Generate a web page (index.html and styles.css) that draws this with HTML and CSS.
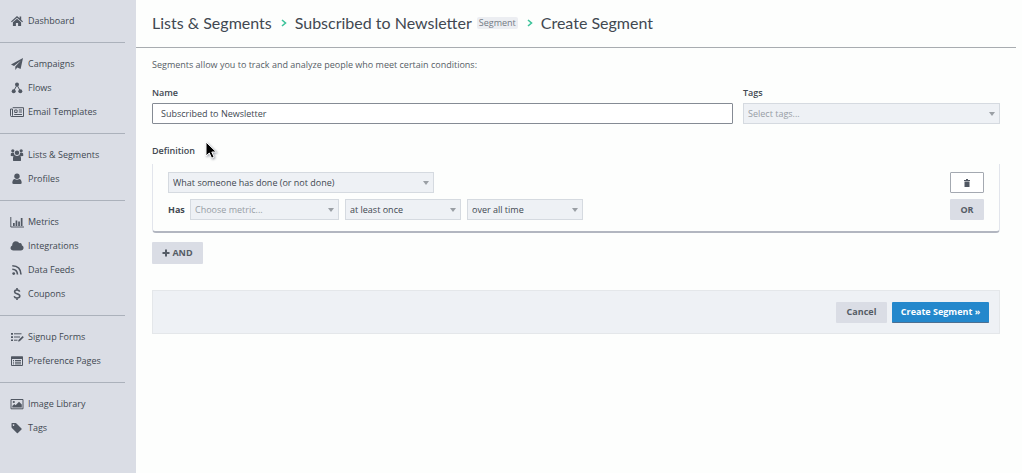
FILE: index.html
```html
<!DOCTYPE html>
<html lang="en">
<head>
<meta charset="utf-8">
<title>Create Segment</title>
<link rel="stylesheet" href="styles.css">
</head>
<body>
<div class="app">
  <nav class="sidebar" aria-label="Main">
    <div class="group">
      <a class="item" href="#"><svg class="icon" viewBox="0 0 14 12"><path d="M7 1 1 6.400l.8.900L7 2.700l5.200 4.600.8-.9-1.800-1.600V1.500H9.600v1.800zM7 3.700 2.900 7.300V11h3V8h2.200v3h3V7.300z"/></svg>Dashboard</a>
    </div>
    <div class="group">
      <a class="item" href="#"><svg class="icon" viewBox="0 0 14 12"><path d="M13 0 1 6.600l3 1.300L11 2.500 5.300 8.500V12l2-2.500 3.300 1.500z"/></svg>Campaigns</a>
      <a class="item" href="#"><svg class="icon" viewBox="0 0 14 12"><circle cx="7" cy="2.600" r="2"/><circle cx="3.700" cy="9.300" r="2"/><circle cx="10.300" cy="9.300" r="2"/><path class="line" d="M3.700 9 7 3l3.300 6"/></svg>Flows</a>
      <a class="item" href="#"><svg class="icon" viewBox="0 0 14 12"><path class="line" d="M2.700 1.700h10.800v8.800H1.500Q.5 10.500.5 9.500V3h2v6.500q0 1-1 1M8.800 4h3.200M8.800 6h3.200M4.200 8.500H12"/><path class="line" d="M4.700 4h2.400v2.500H4.700z"/></svg>Email Templates</a>
    </div>
    <div class="group">
      <a class="item" href="#"><svg class="icon" viewBox="0 0 14 12"><circle cx="2.800" cy="1.800" r="1.600"/><circle cx="11.200" cy="1.800" r="1.600"/><circle cx="7" cy="3.700" r="2.200"/><path d="M.8 7V4.700q.2-1 1.500-1H4q0 2 1 2.600L3.500 7.300zM13.200 7V4.700q-.2-1-1.500-1H10q0 2-1 2.600l1.500 1zM3 11.500V8.700Q3.200 6.300 5 6.200q2 1.500 4 0 1.800.1 2 2.500v2.800q-.3.500-1 .5H4q-.7 0-1-.5z"/></svg>Lists &amp; Segments</a>
      <a class="item" href="#"><svg class="icon" viewBox="0 0 14 12"><circle cx="7" cy="3.200" r="2.700"/><path d="M2.300 9.700Q2.500 6.200 4.800 6q2.200 1.400 4.400 0 2.300.2 2.500 3.700 0 1.300-1.400 1.300H3.700q-1.400 0-1.400-1.300z"/></svg>Profiles</a>
    </div>
    <div class="group">
      <a class="item" href="#"><svg class="icon" viewBox="0 0 14 12"><path class="line" d="M.8 1v10H14"/><path d="M3 7h1.700v3H3zM5.600 4.500h1.700V10H5.600zM8.200 5.500h1.700V10H8.200zM10.800 2h1.700v8h-1.700z"/></svg>Metrics</a>
      <a class="item" href="#"><svg class="icon" viewBox="0 0 14 12"><path d="M3.500 10.500C1.700 10.500.5 9.500.5 8q0-1.800 1.700-2.500C2 3 3.700 1.300 5.900 1.300q2.400 0 3.400 1.900c1.700-.6 2.800.6 2.500 2.100q1.800.6 1.800 2.500c0 1.600-1.200 2.700-2.800 2.700z"/></svg>Integrations</a>
      <a class="item" href="#"><svg class="icon" viewBox="0 0 14 12"><circle cx="3.700" cy="9.600" r="1.400"/><path class="thick" d="M2.300 5.300q4.900.1 5.200 5.200M2.300 1.800q8.400.2 8.700 8.700"/></svg>Data Feeds</a>
      <a class="item" href="#"><svg class="icon" viewBox="0 0 14 12"><path class="thick" d="M9.700 3.600Q9.100 2 7 2 4.700 2 4.600 3.700q0 1.400 2.400 2 2.800.7 2.800 2.300Q9.700 10 7 10q-2.300 0-2.800-1.800M7 0v2M7 10v2"/></svg>Coupons</a>
    </div>
    <div class="group">
      <a class="item" href="#"><svg class="icon" viewBox="0 0 14 12"><path d="M1 2h2v1.700H1zM1 5.200h2v1.700H1zM1 8.400h2v1.700H1z"/><path class="line" d="M4 2.800h7.500M4 6h6M4 9.200h3.500"/><path d="M8 10.600 8.500 9l4.100-4 1.200 1.200-4.100 4z"/></svg>Signup Forms</a>
      <a class="item" href="#"><svg class="icon" viewBox="0 0 14 12"><path class="line" d="M1.500 2h11v8.500h-11zM5 5.500h6M5 7.200h6M5 8.900h6M3 5.500h1M3 7.200h1M3 8.900h1"/><path d="M1 1.500h12V4H1z"/></svg>Preference Pages</a>
    </div>
    <div class="group">
      <a class="item" href="#"><svg class="icon" viewBox="0 0 14 12"><path class="line" d="M1 1.500h12v9.300H1z"/><circle cx="3.800" cy="4" r="1.100"/><path d="M2.300 9.500V8l2-2 1.300 1.200L9 3.700 11.800 6.500v3z"/></svg>Image Library</a>
      <a class="item" href="#"><svg class="icon" viewBox="0 0 14 12"><path fill-rule="evenodd" d="M1.500 1.500Q1.500 1 2 1h3.700l.8.400 5 5q.5.500 0 1l-3.600 3.700q-.5.500-1 0l-5-5-.4-.9zM3.500 2.200a.8.800 0 1 0 .1 0z"/></svg>Tags</a>
    </div>
  </nav>

  <main class="main">
    <header class="header">
      <h1 class="crumbs">
        <a href="#">Lists &amp; Segments</a>
        <svg class="chevron" viewBox="0 0 6 8"><path d="m1 1 3.500 3L1 7"/></svg>
        <a href="#">Subscribed to Newsletter</a>
        <span class="badge">Segment</span>
        <svg class="chevron" viewBox="0 0 6 8"><path d="m1 1 3.500 3L1 7"/></svg>
        <span>Create Segment</span>
      </h1>
    </header>

    <form class="content">
      <p class="intro">Segments allow you to track and analyze people who meet certain conditions:</p>

      <div class="fields">
        <div class="field">
          <label class="label" for="name">Name</label>
          <input class="input" id="name" type="text" value="Subscribed to Newsletter">
        </div>
        <div class="field">
          <label class="label" for="tags">Tags</label>
          <div class="select muted"><select id="tags"><option>Select tags...</option></select></div>
        </div>
      </div>

      <section class="definition" aria-labelledby="definition-title">
        <h2 class="label" id="definition-title">Definition</h2>
        <svg class="pointer" viewBox="0 0 12 18" aria-hidden="true"><path d="M1 1v14l3.300-3 2.300 5.200 2.500-1.100L6.800 11h4.500z"/></svg>
        <div class="card">
          <div class="row">
            <div class="select wide"><select aria-label="Condition"><option>What someone has done (or not done)</option></select></div>
            <button class="button outline" type="button" aria-label="Delete condition"><svg class="trash" viewBox="0 0 6 8"><path d="M0 1h2V0h2v1h2v1H0zM.5 2.500h5V8h-5z"/></svg></button>
          </div>
          <div class="row">
            <label class="has" for="metric">Has</label>
            <div class="select metric muted"><select id="metric"><option>Choose metric...</option></select></div>
            <div class="select small"><select aria-label="Frequency"><option>at least once</option></select></div>
            <div class="select small"><select aria-label="Time range"><option>over all time</option></select></div>
            <button class="button or" type="button">OR</button>
          </div>
        </div>
        <button class="button and" type="button"><svg class="plus" viewBox="0 0 8 8"><path d="M3 .5h2V3h2.500v2H5v2.500H3V5H.5V3H3z"/></svg>AND</button>
      </section>

      <footer class="actions">
        <button class="button cancel" type="button">Cancel</button>
        <button class="button primary" type="submit">Create Segment »</button>
      </footer>
    </form>
  </main>
</div>
</body>
</html>
```
FILE: styles.css
```css
* { box-sizing: border-box; }

body {
  margin: 0;
  background: #fdfefd;
  color: #414851;
  font: 9px/16px "Open Sans", "Noto Sans", sans-serif;
}

a { color: inherit; text-decoration: none; }

button, input, select { font: inherit; color: inherit; margin: 0; }

.app { display: flex; min-height: 100vh; }

.sidebar {
  flex: none;
  width: 136px;
  padding-right: 11px;
  background: #dadde5;
}

.group { padding: 9px 0; border-bottom: 1px solid #abb1bb; }
.group:last-child { border-bottom: 0; }

.item {
  display: flex;
  align-items: center;
  gap: 4px;
  height: 24px;
  padding-left: 10px;
  white-space: nowrap;
}

.icon { width: 14px; height: 12px; fill: #505762; }
.icon .line { fill: none; stroke: #505762; stroke-width: 1; }
.icon .thick { fill: none; stroke: #505762; stroke-width: 1.6; }

.main { flex: 1; min-width: 0; padding-right: 6px; }

.header {
  display: flex;
  align-items: center;
  height: 48px;
  padding: 0 16px 2px;
  border-bottom: 1px solid #a8acb0;
}

.crumbs {
  display: flex;
  align-items: center;
  margin: 0;
  font: 400 16px/24px Lato, sans-serif;
  white-space: nowrap;
}

.chevron {
  width: 6px;
  height: 8px;
  margin: 0 8px 0 9px;
  fill: none;
  stroke: #3cc39a;
  stroke-width: 1.6;
}

.badge {
  margin-left: 5px;
  padding: 0 2px;
  border-radius: 2px;
  background: #eceef2;
  color: #737a84;
  font: 9px/12px "Open Sans", "Noto Sans", sans-serif;
}

.content { padding: 9px 16px 0; }

.intro { margin: 0 0 12px; color: #565d66; }

.fields {
  display: grid;
  grid-template-columns: 1fr 257px;
  gap: 10px;
}

.label { display: block; margin: 0 0 2px; font-size: 9px; font-weight: 600; }

.input {
  display: block;
  width: 100%;
  height: 21px;
  padding: 0 8px;
  border: 1px solid #858b94;
  border-radius: 1px;
  background: #fff;
}

.select { position: relative; }

.select select {
  display: block;
  width: 100%;
  height: 21px;
  padding: 0 16px 0 4px;
  border: 1px solid #d5dae0;
  border-radius: 0;
  background: #eef1f5;
  appearance: none;
}

.select::after {
  content: "";
  position: absolute;
  top: 9px;
  right: 5px;
  border: 3px solid transparent;
  border-top: 4px solid #9a9fa4;
  border-bottom: 0;
  pointer-events: none;
}

.muted select { color: #979da5; }

.definition { position: relative; margin-top: 19px; }
.definition .label { margin-bottom: 5px; }

.pointer {
  position: absolute;
  top: -2px;
  left: 53px;
  width: 12px;
  height: 18px;
  stroke: #fff;
  filter: drop-shadow(1px 1px 1px #9b9fa8);
}

.card {
  display: grid;
  gap: 6px;
  padding: 8px 15px 11px;
  border: 1px solid #e2e5ec;
  border-top: 0;
  border-bottom: 2px solid #b2b6c0;
  border-radius: 0 0 4px 4px;
}

.row { display: flex; align-items: center; gap: 6px; }
.row .button { width: 34px; margin-left: auto; }
.has { width: 16px; font-weight: 700; }
.wide { width: 266px; }
.metric { width: 149px; }
.small { width: 116px; }

.button {
  display: inline-flex;
  align-items: center;
  justify-content: center;
  height: 21px;
  padding: 0 10px;
  border: 0;
  border-radius: 1px;
  background: #dadde5;
  color: #555c66;
  font-weight: 700;
  white-space: nowrap;
}

.row .outline { padding: 0; border: 1px solid #a4a9b1; background: #fff; }
.row .or { padding: 0; }
.and { width: 51px; height: 22px; margin-top: 9px; gap: 2px; }
.trash { width: 6px; height: 8px; fill: #505762; }
.plus { width: 8px; height: 8px; fill: #555c66; }

.actions {
  display: flex;
  align-items: center;
  justify-content: flex-end;
  gap: 5px;
  height: 44px;
  margin-top: 26px;
  padding: 0 10px;
  border: 1px solid #e4e7ea;
  background: #eef1f5;
}

.cancel { width: 51px; }

.primary {
  width: 97px;
  border-bottom: 1px solid #4d6f91;
  background: #2488cc;
  color: #fff;
}
```
